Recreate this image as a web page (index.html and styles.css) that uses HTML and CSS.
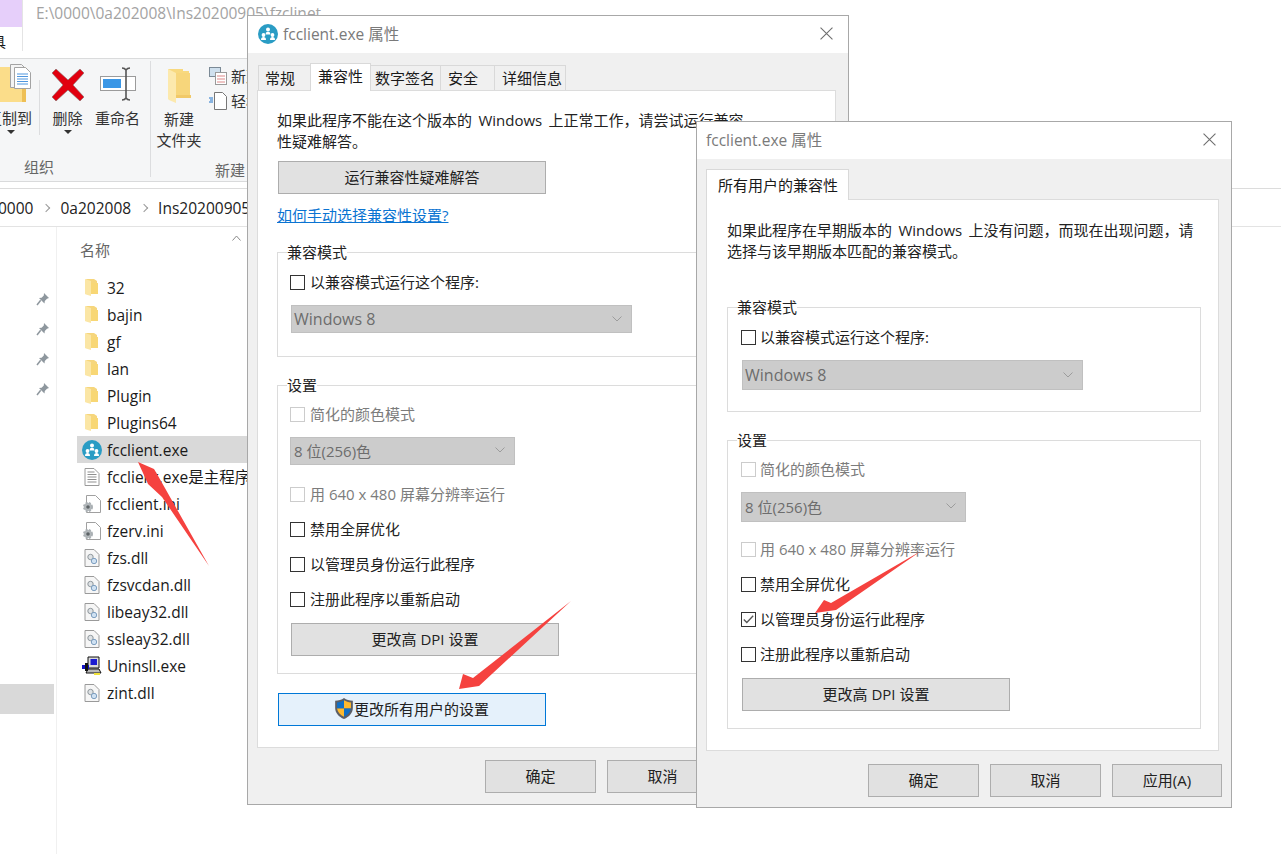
FILE: index.html
```html
<!DOCTYPE html>
<html lang="zh-CN">
<head>
<meta charset="utf-8">
<title>fcclient.exe 属性</title>
<link rel="stylesheet" href="styles.css">
</head>
<body>
<svg width="0" height="0" class="defs">
  <defs>
    <symbol id="app" viewBox="0 0 20 20">
      <circle cx="10" cy="10" r="10" fill="#2a9cc4"/>
      <g fill="#fff">
        <circle cx="10" cy="5.500" r="2"/><path d="M7.600 10.500c0-2 1-2.700 2.400-2.700s2.400.7 2.400 2.700z"/>
        <circle cx="5.500" cy="11" r="1.900"/><path d="M3 16c0-2 1-2.900 2.500-2.900S8 14 8 16z"/>
        <circle cx="14.500" cy="11" r="1.900"/><path d="M12 16c0-2 1-2.900 2.500-2.900S17 14 17 16z"/>
      </g>
    </symbol>
    <symbol id="folder" viewBox="0 0 14 18">
      <path d="M1 0h8l3 2v13H6z" fill="#f6d67c"/>
      <path d="M0 0l6 2v15l-5-1.500L0 15z" fill="#fbe6a5"/>
      <path d="M6 4h7v11H6z" fill="#f8d775"/>
    </symbol>
    <symbol id="bigfolder" viewBox="0 0 23 34">
      <path d="M0 0h15v2h6v25H8z" fill="#f8d97f"/>
      <path d="M8 4h14v24H8z" fill="#f7d67b"/>
      <path d="M20 26h3v3H8v-3z" fill="#f1c968"/>
      <path d="M0 0l8 4v30l-7-3-1-1z" fill="#fce9ad"/>
    </symbol>
    <symbol id="textfile" viewBox="0 0 15 18">
      <path d="M.5.500h9l5 5v12H.500z" fill="#fff" stroke="#9a9a9a"/>
      <path d="M3 4h7M3 6.500h9M3 9h9M3 11.500h9M3 14h9" stroke="#8f8f8f"/>
    </symbol>
    <symbol id="inifile" viewBox="0 0 18 18">
      <path d="M3.500.500h9l5 5v12h-14z" fill="#fff" stroke="#a0a0a0"/>
      <circle cx="5" cy="12" r="4" fill="#b4b9bc" stroke="#aab0b4" stroke-width="2" stroke-dasharray="2 1.200"/>
      <circle cx="5" cy="12" r="1.800" fill="#5d6366"/>
    </symbol>
    <symbol id="dllfile" viewBox="0 0 15 18">
      <path d="M.5.500h9l5 5v12H.500z" fill="#f6f6f6" stroke="#9a9a9a"/>
      <circle cx="6" cy="8" r="2.700" fill="#dfe3e6" stroke="#8f979c"/>
      <circle cx="9.500" cy="12" r="2.700" fill="#cfe1f2" stroke="#7e9fc0"/>
    </symbol>
    <symbol id="setup" viewBox="0 0 20 20">
      <path d="M6 1h11v11H6z" fill="#d9d9d9" stroke="#111"/>
      <path d="M8.500 3H15v6H8.500z" fill="#1a1ad0"/>
      <path d="M6 13h11l2 4H4z" fill="#bbb" stroke="#111"/>
      <path d="M0 9h7v4H0z" fill="#1414c8"/>
      <path d="M3 7h3v8H3z" fill="#111"/>
      <path d="M12 17h6v2h-6z" fill="#f0e23a"/>
    </symbol>
    <symbol id="pin" viewBox="0 0 14 14">
      <path d="M8 1l5 5-2 .7-2.200 2.200-.3 2.600L3 6l2.600-.3L7.800 3.500z" fill="#8e979e"/>
      <path d="M4.700 8.300L1 13" stroke="#8e979e" stroke-width="1.500"/>
    </symbol>
    <symbol id="close" viewBox="0 0 12 12">
      <path d="M.5.500l11 11M11.500.500l-11 11" stroke="#6e6e6e" fill="none"/>
    </symbol>
    <symbol id="caret" viewBox="0 0 10 6">
      <path d="M.5.500L5 5 9.500.500" stroke="#9c9c9c" fill="none"/>
    </symbol>
    <symbol id="shield" viewBox="0 0 18 19">
      <path d="M9 0c2 1.600 5 2.500 8 2.500V9c0 4.500-3.300 8-8 10-4.700-2-8-5.500-8-10V2.500C4 2.500 7 1.600 9 0z" fill="#5c5f66"/>
      <path d="M9 2c-1.800 1.100-3.900 1.800-6.300 2V9.500H9z" fill="#0f6fc6"/>
      <path d="M9 2c1.800 1.100 3.900 1.800 6.300 2V9.500H9z" fill="#fdb92e"/>
      <path d="M2.700 9.500H9V17c-3.500-1.700-5.800-4.200-6.300-7.500z" fill="#fdb92e"/>
      <path d="M15.300 9.500H9V17c3.500-1.700 5.800-4.200 6.300-7.500z" fill="#0f6fc6"/>
    </symbol>
  </defs>
</svg>

<main class="desktop">
  <section class="explorer">
    <header class="ex-title">
      <div class="ex-tabhead">
        <div class="ex-purple"></div>
        <div class="ex-tool">具</div>
      </div>
      <div class="ex-path">E:\0000\0a202008\Ins20200905\fzclinet</div>
    </header>

    <div class="ribbon">
      <div class="rb-group rb-org">
        <div class="rb-items">
          <div class="rb-big rb-copy">
            <svg class="ic-copy" width="31" height="40" viewBox="0 0 31 40">
              <path d="M0 3h26v35H0z" fill="#fbdd8a"/>
              <path d="M22 24h4v14h-4z" fill="#eebf55"/>
              <path d="M10.500 .5h11l5 5v18h-16z" fill="#f4f4f4" stroke="#a3a3a3"/>
              <path d="M14.500 3.500h11l5 5v16h-16z" fill="#fff" stroke="#a3a3a3"/>
              <path d="M17 10h11M17 12.500h11M17 15h11M17 17.500h11M17 20h11" stroke="#4f96de"/>
            </svg>
            <span class="rb-label">复制到</span>
            <i class="rb-drop"></i>
          </div>
          <div class="rb-sep"></div>
          <div class="rb-big rb-del">
            <svg width="32" height="32" viewBox="0 0 32 32"><path d="M4 0l12 11L28 0l4 4-11 12 11 12-4 4-12-11L4 32l-4-4 11-12L0 4z" fill="#e1000f" stroke="#7f6f6f" stroke-width=".6"/></svg>
            <span class="rb-label">删除</span>
            <i class="rb-drop"></i>
          </div>
          <div class="rb-big rb-ren">
            <svg width="36" height="34" viewBox="0 0 36 34">
              <rect x=".5" y="9.500" width="35" height="14" fill="#fff" stroke="#9b9b9b"/>
              <rect x="3" y="12" width="18" height="9" fill="#3b97e6"/>
              <path d="M22 1c2 0 3 .5 4 2 1-1.500 2-2 4-2M22 33c2 0 3-.5 4-2 1 1.500 2 2 4 2M26 3v28" stroke="#555" stroke-width="1.600" fill="none"/>
            </svg>
            <span class="rb-label">重命名</span>
          </div>
        </div>
        <div class="rb-caption">组织</div>
      </div>
      <div class="rb-group rb-new">
        <div class="rb-items">
          <div class="rb-big rb-folder">
            <svg class="ic-newfolder" width="23" height="34"><use href="#bigfolder"/></svg>
            <span class="rb-label">新建<br>文件夹</span>
          </div>
          <div class="rb-side">
            <div class="rb-small">
              <svg width="18" height="18" viewBox="0 0 18 18"><rect x=".5" y=".5" width="11" height="9" fill="#cfe0ee" stroke="#7b8a96"/><rect x="6.500" y="5.500" width="11" height="12" fill="#fff" stroke="#9a9a9a"/><path d="M8 9h8M8 12h8M8 15h8" stroke="#d88"/></svg>
              <span>新建项目</span>
            </div>
            <div class="rb-small">
              <svg width="18" height="18" viewBox="0 0 18 18"><path d="M5.500.500h8l4 4v13h-12z" fill="#fff" stroke="#777"/><path d="M0 6h4M1 8h3M0 10h4" stroke="#1f73c9"/></svg>
              <span>轻松访问</span>
            </div>
          </div>
        </div>
        <div class="rb-caption rb-caption-new">新建</div>
      </div>
    </div>

    <nav class="address">
      <span>0000</span><i class="chev"></i>
      <span>0a202008</span><i class="chev"></i>
      <span>Ins20200905</span>
    </nav>

    <div class="browser">
      <aside class="navpane">
        <svg class="pin" width="14" height="14"><use href="#pin"/></svg>
        <svg class="pin" width="14" height="14"><use href="#pin"/></svg>
        <svg class="pin" width="14" height="14"><use href="#pin"/></svg>
        <svg class="pin" width="14" height="14"><use href="#pin"/></svg>
        <div class="nav-sel"></div>
      </aside>
      <div class="files">
        <div class="col-head"><span>名称</span><svg class="sort" width="9" height="6" viewBox="0 0 9 6"><path d="M.5 5.500L4.500 1l4 4.500" fill="none" stroke="#8a8a8a"/></svg></div>
        <ul class="file-list">
          <li class="file"><svg class="ico" width="20" height="18"><use href="#folder"/></svg><span>32</span></li>
          <li class="file"><svg class="ico" width="20" height="18"><use href="#folder"/></svg><span>bajin</span></li>
          <li class="file"><svg class="ico" width="20" height="18"><use href="#folder"/></svg><span>gf</span></li>
          <li class="file"><svg class="ico" width="20" height="18"><use href="#folder"/></svg><span>lan</span></li>
          <li class="file"><svg class="ico" width="20" height="18"><use href="#folder"/></svg><span>Plugin</span></li>
          <li class="file"><svg class="ico" width="20" height="18"><use href="#folder"/></svg><span>Plugins64</span></li>
          <li class="file selected"><svg class="ico" width="20" height="20"><use href="#app"/></svg><span>fcclient.exe</span></li>
          <li class="file"><svg class="ico" width="20" height="18"><use href="#textfile"/></svg><span>fcclient.exe是主程序</span></li>
          <li class="file"><svg class="ico" width="20" height="18"><use href="#inifile"/></svg><span>fcclient.ini</span></li>
          <li class="file"><svg class="ico" width="20" height="18"><use href="#inifile"/></svg><span>fzerv.ini</span></li>
          <li class="file"><svg class="ico" width="20" height="18"><use href="#dllfile"/></svg><span>fzs.dll</span></li>
          <li class="file"><svg class="ico" width="20" height="18"><use href="#dllfile"/></svg><span>fzsvcdan.dll</span></li>
          <li class="file"><svg class="ico" width="20" height="18"><use href="#dllfile"/></svg><span>libeay32.dll</span></li>
          <li class="file"><svg class="ico" width="20" height="18"><use href="#dllfile"/></svg><span>ssleay32.dll</span></li>
          <li class="file"><svg class="ico" width="20" height="20"><use href="#setup"/></svg><span>Uninsll.exe</span></li>
          <li class="file"><svg class="ico" width="20" height="18"><use href="#dllfile"/></svg><span>zint.dll</span></li>
        </ul>
      </div>
    </div>
  </section>

  <section class="dialog dlg-back">
    <header class="dlg-title">
      <svg class="dlg-icon" width="20" height="20"><use href="#app"/></svg>
      <span class="dlg-name">fcclient.exe 属性</span>
      <svg class="dlg-close" width="13" height="13"><use href="#close"/></svg>
    </header>
    <div class="tabs">
      <div class="tab t-gen">常规</div>
      <div class="tab active t-com">兼容性</div>
      <div class="tab t-sig">数字签名</div>
      <div class="tab t-sec">安全</div>
      <div class="tab t-det">详细信息</div>
    </div>
    <div class="panel">
      <p class="intro">如果此程序不能在这个版本的 Windows 上正常工作，请尝试运行兼容<br>性疑难解答。</p>
      <button class="btn btn-wide btn-run">运行兼容性疑难解答</button>
      <a class="howto" href="#">如何手动选择兼容性设置?</a>
      <fieldset class="group g-mode">
        <legend>兼容模式</legend>
        <label class="check"><i class="box"></i>以兼容模式运行这个程序:</label>
        <div class="select sel-os">Windows 8<svg width="10" height="6"><use href="#caret"/></svg></div>
      </fieldset>
      <fieldset class="group g-set">
        <legend>设置</legend>
        <label class="check off"><i class="box"></i>简化的颜色模式</label>
        <div class="select sel-color">8 位(256)色<svg width="10" height="6"><use href="#caret"/></svg></div>
        <label class="check off c-640"><i class="box"></i>用 640 x 480 屏幕分辨率运行</label>
        <label class="check c-next"><i class="box"></i>禁用全屏优化</label>
        <label class="check c-next"><i class="box"></i>以管理员身份运行此程序</label>
        <label class="check c-next"><i class="box"></i>注册此程序以重新启动</label>
        <button class="btn btn-wide btn-dpi">更改高 DPI 设置</button>
      </fieldset>
      <button class="btn btn-wide btn-all"><svg width="20" height="21"><use href="#shield"/></svg>更改所有用户的设置</button>
    </div>
    <footer class="dlg-foot">
      <button class="btn btn-foot">确定</button>
      <button class="btn btn-foot">取消</button>
    </footer>
  </section>

  <section class="dialog dlg-front">
    <header class="dlg-title">
      <span class="dlg-name">fcclient.exe 属性</span>
      <svg class="dlg-close" width="13" height="13"><use href="#close"/></svg>
    </header>
    <div class="tabs tabs-front">
      <div class="tab active t-all">所有用户的兼容性</div>
    </div>
    <div class="panel">
      <p class="intro">如果此程序在早期版本的 Windows 上没有问题，而现在出现问题，请<br>选择与该早期版本匹配的兼容模式。</p>
      <fieldset class="group g-mode">
        <legend>兼容模式</legend>
        <label class="check"><i class="box"></i>以兼容模式运行这个程序:</label>
        <div class="select sel-os">Windows 8<svg width="10" height="6"><use href="#caret"/></svg></div>
      </fieldset>
      <fieldset class="group g-set">
        <legend>设置</legend>
        <label class="check off"><i class="box"></i>简化的颜色模式</label>
        <div class="select sel-color">8 位(256)色<svg width="10" height="6"><use href="#caret"/></svg></div>
        <label class="check off c-640"><i class="box"></i>用 640 x 480 屏幕分辨率运行</label>
        <label class="check c-next"><i class="box"></i>禁用全屏优化</label>
        <label class="check c-next"><i class="box checked"><svg width="11" height="9" viewBox="0 0 11 9"><path d="M.8 4.500l3 3L10.200.8" fill="none" stroke="#555" stroke-width="1.300"/></svg></i>以管理员身份运行此程序</label>
        <label class="check c-next"><i class="box"></i>注册此程序以重新启动</label>
        <button class="btn btn-wide btn-dpi">更改高 DPI 设置</button>
      </fieldset>
    </div>
    <footer class="dlg-foot">
      <button class="btn btn-foot">确定</button>
      <button class="btn btn-foot">取消</button>
      <button class="btn btn-foot btn-apply">应用(A)</button>
    </footer>
  </section>

  <svg class="arrows" width="1281" height="854" viewBox="0 0 1281 854">
    <path d="M138 462L154 469 157 474 209 566 162 497 148 484z" fill="#f5423f"/>
    <path d="M459 689L463 674 473 678 571 601 479 686z" fill="#f5423f"/>
    <path d="M815 613L824 600 831 603 921 551 836 610z" fill="#f5423f"/>
  </svg>
</main>
</body>
</html>
```

FILE: styles.css
```css
* { box-sizing: border-box; }
html, body { margin: 0; padding: 0; background: #fff; }
body {
  font-family: "Open Sans", "Noto Sans CJK SC", sans-serif;
  font-size: 15px;
  color: #1a1a1a;
}
.defs { position: absolute; }
.desktop { position: relative; width: 1281px; height: 854px; overflow: hidden; background: #fff; }

/* Explorer */
.explorer { width: 1281px; height: 854px; display: flex; flex-direction: column; overflow: hidden; white-space: nowrap; }
.ex-title { height: 59px; display: flex; flex: none; width: 260px; overflow: visible; border-bottom: 1px solid #dadbdc; }
.ex-tabhead { width: 23px; flex: none; border-right: 1px solid #e4e4e4; height: 51px; }
.ex-purple { height: 27px; background: #e6cffa; }
.ex-tool { margin-left: -8px; font-size: 14px; line-height: 29px; overflow: hidden; }
.ex-path { margin-left: 13px; padding-top: 3px; font-size: 15.500px; line-height: 20px; color: #a3a3a3; }

.ribbon { height: 123px; width: 260px; flex: none; display: flex; background: #f5f6f7; border-bottom: 1px solid #d9dadb; }
.rb-group { position: relative; flex: none; display: flex; flex-direction: column; }
.rb-org { width: 151px; border-right: 1px solid #dcdddf; margin: 2px 0 4px; }
.rb-new { flex: 1; margin-top: 2px; overflow: hidden; }
.rb-items { display: flex; height: 93px; }
.rb-big { display: flex; flex-direction: column; align-items: center; flex: none; position: relative; }
.rb-label { font-size: 15px; line-height: 21px; color: #333; text-align: center; }
.rb-copy { width: 39px; overflow: hidden; padding-top: 3px; align-items: flex-start; }
.rb-copy .rb-label { align-self: flex-end; margin-right: 7px; }
.ic-copy { margin-bottom: 4px; flex: none; }
.rb-sep { width: 1px; height: 55px; background: #dcdddf; margin-top: 19px; flex: none; }
.rb-del { width: 55px; padding-top: 8px; }
.rb-del svg { margin-bottom: 7px; flex: none; }
.rb-ren { width: 45px; padding-top: 6px; }
.rb-ren svg { margin-bottom: 7px; flex: none; }
.rb-drop { width: 0; height: 0; border: 4px solid transparent; border-top: 4px solid #333; border-bottom: 0; margin-top: 1px; }
.rb-copy .rb-drop { margin-left: 7px; }
.rb-folder { width: 56px; padding-top: 8px; }
.ic-newfolder { margin-bottom: 6px; flex: none; }
.rb-side { padding: 5px 0 0 2px; display: flex; flex-direction: column; gap: 5px; }
.rb-small { display: flex; align-items: center; gap: 4px; font-size: 15px; line-height: 20px; color: #333; height: 20px; }
.rb-caption { text-align: center; font-size: 15px; line-height: 20px; color: #666; margin-top: 7px; width: 78px; }
.rb-caption-new { width: 100%; text-align: left; padding-left: 64px; margin-top: 6px; }

.address { height: 39px; flex: none; margin-top: 6px; display: flex; align-items: center; border-top: 1px solid #dcdcdc; border-bottom: 1px solid #e3e3e3; font-size: 15.500px; color: #222; }
.address span:first-child { margin-left: -2px; }
.chev { width: 6px; height: 6px; border-top: 1.500px solid #999; border-right: 1.500px solid #999; transform: rotate(45deg); margin: 0 11px 0 10px; flex: none; }

.browser { flex: 1; display: flex; width: 260px; }
.navpane { width: 57px; flex: none; border-right: 1px solid #f0f0f0; display: flex; flex-direction: column; align-items: flex-end; padding-top: 65px; }
.pin { margin: 0 6px 16px 0; flex: none; }
.nav-sel { width: 54px; height: 30px; background: #d9d9d9; margin: 272px 2px 0 0; align-self: flex-start; flex: none; }

.files { flex: 1; min-width: 0; overflow: hidden; }
.col-head { height: 47px; padding: 13px 0 0 23px; display: flex; font-size: 15px; line-height: 20px; color: #666; }
.sort { margin: -5px 0 0 122px; flex: none; }
.file-list { list-style: none; margin: 0; padding: 0 0 0 20px; }
.file { height: 27px; display: flex; align-items: center; gap: 5px; padding-left: 5px; font-size: 15.500px; }
.file .ico { flex: none; }
.file.selected { background: #d9d9d9; }

/* Dialogs */
.dialog { position: absolute; background: #f0f0f0; border: 1px solid #a8a8a8; display: flex; flex-direction: column; white-space: nowrap; }
.dlg-back { left: 247px; top: 15px; width: 602px; height: 790px; }
.dlg-front { left: 696px; top: 121px; width: 536px; height: 687px; }
.dlg-title { height: 37px; flex: none; background: #fff; display: flex; align-items: center; padding: 0 15px 2px 9px; color: #7a7a7a; font-size: 15.500px; }
.dlg-back .dlg-title { padding-left: 10px; }
.dlg-icon { margin-right: 5px; flex: none; }
.dlg-name { flex: 1; }
.dlg-close { flex: none; }
.tabs { display: flex; height: 37px; flex: none; padding: 11px 0 0 11px; align-items: flex-end; position: relative; z-index: 1; }
.tab { height: 25px; border: 1px solid #d9d9d9; border-bottom: 0; background: #f0f0f0; margin-left: -1px; font-size: 15px; line-height: 25px; text-align: left; flex: none; }
.tab.active { height: 28px; background: #fff; margin-bottom: -1px; line-height: 25px; }
.t-gen { width: 53px; padding-left: 6px; }
.t-com { width: 61px; padding-left: 7px; }
.t-sig { width: 71px; padding-left: 4px; }
.t-sec { width: 55px; padding-left: 7px; }
.t-det { width: 72px; padding-left: 7px; }
.tabs-front { height: 40px; padding-left: 10px; }
.tab.active.t-all { width: 143px; height: 31px; line-height: 30px; padding-left: 11px; }

.panel { background: #fff; border: 1px solid #dcdcdc; flex: none; display: flex; flex-direction: column; align-items: flex-start; }
.dlg-back .panel { width: 579px; height: 658px; margin-left: 9px; padding: 19px 0 0 19px; }
.dlg-front .panel { width: 513px; height: 552px; margin-left: 9px; padding: 20px 0 0 20px; }
.intro { margin: 0; line-height: 21px; font-size: 15px; color: #222; word-spacing: 2.500px; }
.btn { font: inherit; font-size: 15px; color: #222; background: #e1e1e1; border: 1px solid #adadad; padding: 0 0 2px; display: inline-flex; align-items: center; justify-content: center; flex: none; }
.btn-wide { width: 268px; height: 33px; }
.btn-run { margin: 9px 0 0 1px; }
.howto { margin-top: 11px; line-height: 21px; font-size: 15px; color: #0a74d2; }

.group { margin: 0; padding: 0; border: 1px solid #dcdcdc; min-width: 0; display: flex; flex-direction: column; align-items: flex-start; }
.group legend { padding: 0; font-size: 15px; line-height: 20px; color: #222; }
.g-mode { height: 115px; }
.dlg-back .group { padding-left: 12px; }
.dlg-front .group { padding-left: 13px; }
.dlg-back .group legend { margin-left: -3px; }
.dlg-front .group legend { margin-left: -4px; }
.g-mode { padding-top: 10px; }
.g-set { padding-top: 9px; }
.dlg-back .g-mode { width: 560px; margin-top: 16px; }
.dlg-back .g-set { width: 560px; height: 299px; margin-top: 18px; }
.dlg-front .g-mode { width: 474px; margin-top: 35px; }
.dlg-front .g-set { width: 474px; height: 299px; margin-top: 18px; }

.check { display: flex; align-items: center; height: 20px; font-size: 15px; line-height: 20px; color: #222; flex: none; }
.box { width: 15px; height: 15px; border: 1px solid #333; background: #fff; margin-right: 5px; flex: none; display: flex; align-items: center; justify-content: center; }
.dlg-front .box { margin-right: 4px; }
.check.off { color: #7c7c7c; }
.check.off .box { border-color: #ccc; }
.c-640 { margin-top: 17px; }
.dlg-back .c-640 { margin-top: 19px; }
.c-next { margin-top: 15px; }
.select { background: #ccc; border: 1px solid #c0c0c0; color: #6d6d6d; height: 30px; display: flex; align-items: center; justify-content: space-between; padding: 0 9px 0 3px; font-size: 15px; flex: none; margin-top: 13px; }
.dlg-back .select { height: 28px; }
.sel-os { width: 341px; margin-left: 1px; padding-left: 2px; font-size: 16px; }
.sel-color { width: 225px; padding-bottom: 2px; }
.btn-dpi { margin-top: 14px; margin-left: 1px; }
.btn-all { margin: 19px 0 0 1px; background: #e5f1fb; border-color: #0078d7; }
.btn-all svg { margin-left: -1px; }

.dlg-foot { flex: 1; display: flex; justify-content: flex-end; gap: 11px; padding: 13px 9px 0 0; }
.dlg-back .dlg-foot { justify-content: flex-start; padding: 12px 0 0 237px; }
.btn-foot { width: 111px; height: 33px; }
.btn-apply { width: 110px; }

.arrows { position: absolute; left: 0; top: 0; pointer-events: none; }
```
